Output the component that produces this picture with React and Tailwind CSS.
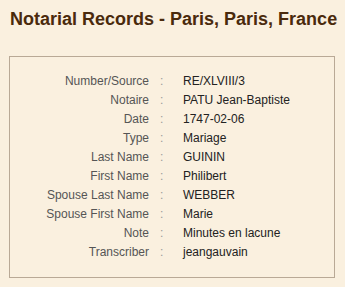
const record = [
  ['Number/Source', 'RE/XLVIII/3'],
  ['Notaire', 'PATU Jean-Baptiste'],
  ['Date', '1747-02-06'],
  ['Type', 'Mariage'],
  ['Last Name', 'GUININ'],
  ['First Name', 'Philibert'],
  ['Spouse Last Name', 'WEBBER'],
  ['Spouse First Name', 'Marie'],
  ['Note', 'Minutes en lacune'],
  ['Transcriber', 'jeangauvain'],
];

export default function App() {
  return (
    <div className="min-h-screen bg-[#faf0df] font-['Liberation_Sans',Arial,sans-serif] pt-[8px] pl-[9px]">
      <h1 className="pl-[1px] text-[18px] leading-[22px] font-bold text-[#4a2a0c]">
        Notarial Records - Paris, Paris, France
      </h1>

      <div className="mt-[26px] w-[326px] h-[222px] border border-[#b9a996] pt-[15px]">
        <div className="grid grid-cols-[139px_34px_1fr] text-[12px] leading-[19px]">
          {record.map(([label, value]) => (
            <div key={label} className="contents">
              <span className="text-right text-[#555555]">{label}</span>
              <span className="pl-[11px] text-[#9a9a9a]">:</span>
              <span className="text-[#222222]">{value}</span>
            </div>
          ))}
        </div>
      </div>
    </div>
  );
}
